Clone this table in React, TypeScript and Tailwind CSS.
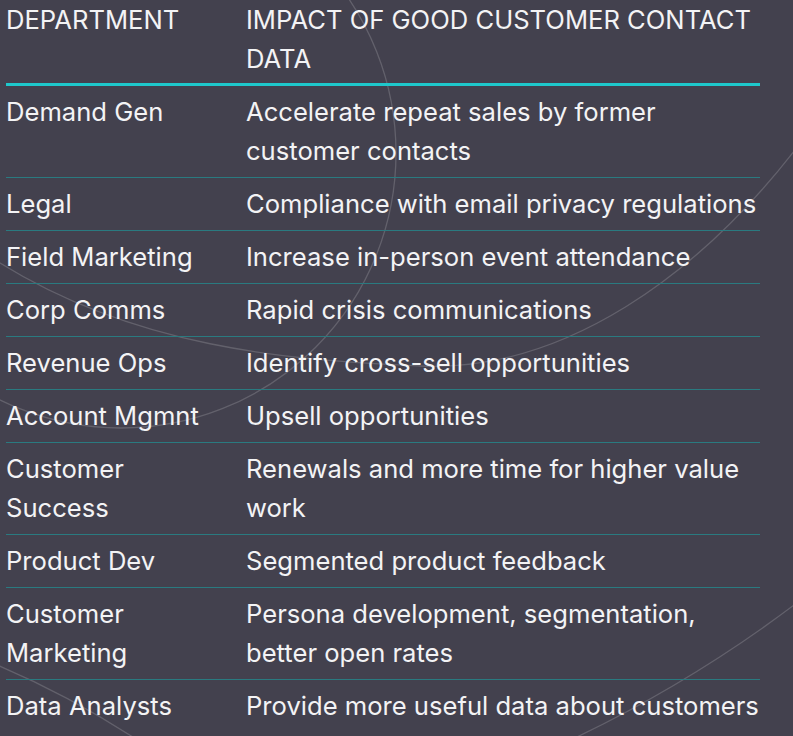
import React from "react";

const rows: { dept: string; impact: string }[] = [
  { dept: "Demand Gen", impact: "Accelerate repeat sales by former customer contacts" },
  { dept: "Legal", impact: "Compliance with email privacy regulations" },
  { dept: "Field Marketing", impact: "Increase in-person event attendance" },
  { dept: "Corp Comms", impact: "Rapid crisis communications" },
  { dept: "Revenue Ops", impact: "Identify cross-sell opportunities" },
  { dept: "Account Mgmnt", impact: "Upsell opportunities" },
  { dept: "Customer Success", impact: "Renewals and more time for higher value work" },
  { dept: "Product Dev", impact: "Segmented product feedback" },
  { dept: "Customer Marketing", impact: "Persona development, segmentation, better open rates" },
  { dept: "Data Analysts", impact: "Provide more useful data about customers" },
];

// faint decorative arcs behind the table
const Decor = () => (
  <svg
    className="absolute inset-0 pointer-events-none"
    width="793"
    height="736"
    viewBox="0 0 793 736"
    fill="none"
  >
    <g stroke="rgba(255,255,255,0.17)" strokeWidth="1.3">
      <circle cx="121" cy="153" r="275" />
      <path d="M -20 250 C 130 352 300 360 420 366 C 560 372 700 280 810 130" />
      <path d="M 820 585 Q 700 680 560 745" />
      <path d="M -10 662 Q 70 695 145 745" />
    </g>
  </svg>
);

export default function App() {
  return (
    <div
      className="relative w-[793px] h-[736px] overflow-hidden bg-[#43414e] text-[#f3f3f5]"
      style={{ fontFamily: "Inter, 'Noto Sans', sans-serif" }}
    >
      <Decor />
      <div className="relative ml-[6px] w-[754px] text-[25.6px] leading-[39px]">
        <div className="grid grid-cols-[240px_1fr] border-b-[3px] border-[#1ec8cc] pb-[5px]">
          <div className="pr-[20px]">DEPARTMENT</div>
          <div>IMPACT OF GOOD CUSTOMER CONTACT DATA</div>
        </div>
        {rows.map((r) => (
          <div
            key={r.dept}
            className="grid grid-cols-[240px_1fr] border-b border-[#2a7a80] last:border-b-0 pt-[6px] pb-[7px]"
          >
            <div className="pr-[20px]">{r.dept}</div>
            <div>{r.impact}</div>
          </div>
        ))}
      </div>
    </div>
  );
}
